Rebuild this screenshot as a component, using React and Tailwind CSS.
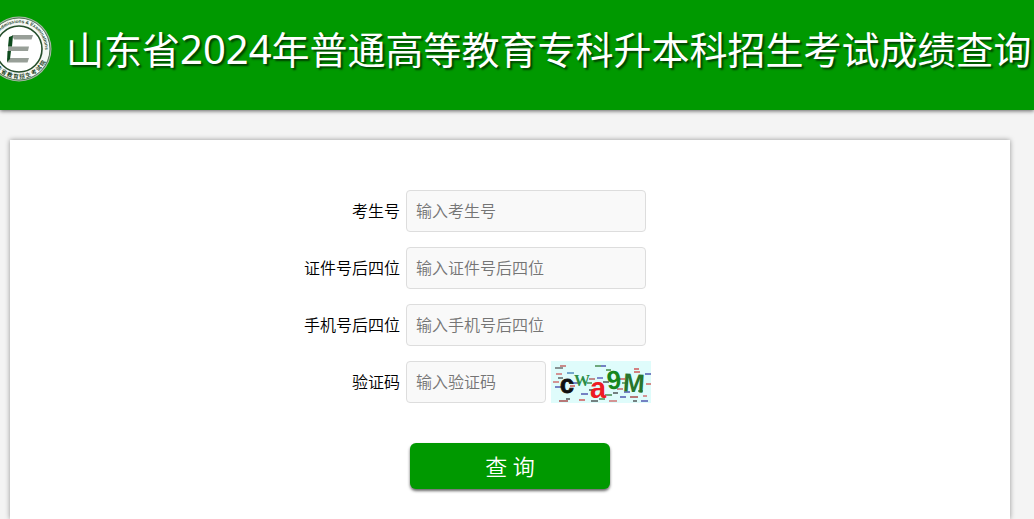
import React, { useState } from 'react';

const FIELDS = [
  { id: 'ksh', label: '考生号', placeholder: '输入考生号' },
  { id: 'zjh', label: '证件号后四位', placeholder: '输入证件号后四位' },
  { id: 'sjh', label: '手机号后四位', placeholder: '输入手机号后四位' },
];

// noise strokes of the captcha: x, y, length, colour
const NOISE = [
  [9, 5, 6, '#b33'], [4, 7, 8, '#444'], [44, 5, 6, '#186818'], [50, 5, 5, '#229'], [83, 8, 5, '#c22'],
  [83, 11, 6, '#c22'], [16, 12, 7, '#26a'], [5, 13, 6, '#c44'], [7, 17, 5, '#333'], [55, 9, 5, '#186818'],
  [38, 18, 6, '#a33'], [46, 17, 6, '#33a'], [52, 21, 6, '#222'], [68, 18, 6, '#c22'], [71, 22, 6, '#186818'],
  [94, 13, 6, '#229'], [2, 21, 6, '#c44'], [4, 26, 8, '#229'], [19, 25, 5, '#c22'], [30, 33, 7, '#229'],
  [22, 22, 6, '#229'], [36, 22, 5, '#186818'], [66, 28, 6, '#b33'], [73, 31, 6, '#229'], [87, 30, 5, '#186818'],
  [38, 29, 5, '#222'], [54, 34, 7, '#186818'], [8, 40, 9, '#911'], [15, 38, 4, '#222'], [28, 39, 6, '#c22'],
  [40, 40, 7, '#222'], [48, 38, 6, '#186818'], [58, 40, 8, '#c44'], [69, 36, 6, '#229'], [79, 36, 8, '#911'],
  [90, 40, 7, '#229'], [95, 23, 5, '#c33'], [92, 35, 4, '#c44'], [62, 32, 5, '#222'], [82, 40, 4, '#222'],
];

function Logo() {
  return (
    <svg viewBox="0 0 66 66" className="h-[66px] w-[66px] shrink-0" role="img" aria-label="logo">
      <defs>
        <path id="ring-top" d="M8 40a26 26 0 1 1 50 0" />
        <path id="ring-bottom" d="M3.5 33a29.500 29.500 0 0 0 59 0" />
      </defs>
      <circle cx="33" cy="33" r="32.5" fill="#a9bba9" />
      <circle cx="33" cy="33" r="31" fill="#f6f8f6" stroke="#4f7353" strokeWidth="1" />
      <circle cx="33" cy="33" r="23" fill="#fff" stroke="#244d2a" strokeWidth="1.600" />
      <text fontFamily="Liberation Sans, sans-serif" fontSize="4.7" fontWeight="700" fill="#304f34">
        <textPath href="#ring-top" startOffset="48%" textAnchor="middle">Education Admissions &amp; Examinations</textPath>
      </text>
      <text fontFamily="Noto Sans CJK SC, sans-serif" fontSize="5.5" fontWeight="700" fill="#1d4424">
        <textPath href="#ring-bottom" startOffset="50%" textAnchor="middle">山 东 省 教 育 招 生 考 试 院</textPath>
      </text>
      <path d="M26 19h21l-1.5 4.500H28zM22 30.500h21l-1 4.500H22zM21.500 42h21.500l-1.500 4.500H21z" fill="#989f98" />
      <path d="M23 21l4-1.500-1 11h-4zM21.500 35h3.500l-1 8-3 3z" fill="#0e4a1d" />
    </svg>
  );
}

function Captcha() {
  return (
    <svg viewBox="0 0 100 42" className="h-[42px] w-[100px]" role="img" aria-label="验证码图片">
      <rect width="100" height="42" fill="#dffcfb" />
      {NOISE.map(([x, y, w, c], i) => (
        <path key={i} d={`M${x} ${y}h${w}`} stroke={c} strokeWidth="1.4" opacity="0.8" />
      ))}
      <g fontWeight="700" textAnchor="middle" strokeWidth="0.8">
        <text x="16" y="32" fontSize="25" fill="#111" stroke="#111" fontFamily="Liberation Sans, sans-serif">c</text>
        <text x="31" y="25" fontSize="16" fill="#2c8d46" fontFamily="Liberation Serif, serif">W</text>
        <text x="47" y="37" fontSize="29" fill="#ee1c24" fontFamily="Liberation Sans, sans-serif">a</text>
        <text x="63" y="28" fontSize="26" fill="#15861c" fontFamily="Liberation Sans, sans-serif" transform="rotate(-5 63 20)">9</text>
        <text x="83" y="31" fontSize="26" fill="#28752c" fontFamily="Liberation Sans, sans-serif" transform="rotate(4 83 22)">M</text>
      </g>
    </svg>
  );
}

function Row({ id, label, children }) {
  return (
    <div className="flex items-center gap-1.5">
      <label htmlFor={id} className="w-[39%] text-right text-base text-black">{label}</label>
      {children}
    </div>
  );
}

export default function App() {
  const [form, setForm] = useState({ ksh: '', zjh: '', sjh: '', yzm: '' });

  const handleChange = (e) => setForm({ ...form, [e.target.id]: e.target.value });

  const inputClass = 'h-[42px] rounded border border-[#ddd] bg-[#f9f9f9] px-[9px] text-base text-black placeholder:text-[#757575] outline-none focus:border-[#090]';

  return (
    <div className="flex min-h-screen flex-col overflow-x-hidden bg-[#f4f4f4] font-['Noto_Sans','Noto_Sans_CJK_SC',sans-serif]">
      <header className="flex h-[110px] items-start bg-[#090] pt-4 shadow-[0_1px_4px_rgba(0,0,0,0.6)]">
        <div className="-ml-3.5 flex items-center gap-3.5">
          <Logo />
          <h1 className="whitespace-nowrap text-[38px] leading-[66px] text-white [text-shadow:2px_2px_2px_rgba(0,0,0,0.6)]">
            山东省<span className="text-[40px]">2024</span>年普通高等教育专科升本科招生考试成绩查询
          </h1>
        </div>
      </header>

      <main className="mt-[30px] mr-6 ml-2.5 flex-1 bg-white pt-[50px] font-[350] shadow-[0_0_5px_rgba(0,0,0,0.4)]">
        <form onSubmit={(e) => e.preventDefault()}>
          <div className="flex flex-col gap-[15px]">
            {FIELDS.map((f) => (
              <Row key={f.id} id={f.id} label={f.label}>
                <input id={f.id} type="text" className={`${inputClass} w-60`} placeholder={f.placeholder} value={form[f.id]} onChange={handleChange} />
              </Row>
            ))}
            <Row id="yzm" label="验证码">
              <div className="flex gap-[5px]">
                <input id="yzm" type="text" className={`${inputClass} w-[140px]`} placeholder="输入验证码" value={form.yzm} onChange={handleChange} />
                <Captcha />
              </div>
            </Row>
          </div>
          <div className="mt-10 flex justify-center pb-[30px]">
            <button type="submit" className="h-[46px] w-[200px] cursor-pointer rounded-md bg-[#090] text-[22px] text-white shadow-[0_2px_3px_rgba(0,0,0,0.6)] hover:bg-[#080]">
              查 询
            </button>
          </div>
        </form>
      </main>
    </div>
  );
}
